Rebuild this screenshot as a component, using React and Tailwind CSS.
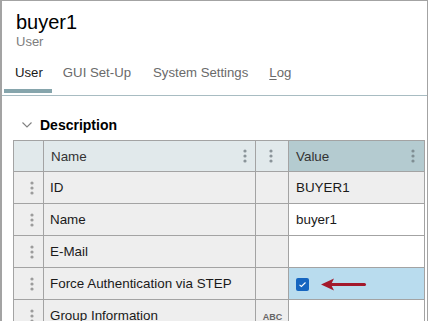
import React from "react";

const Dots = ({ color = "#8a9499" }) => (
  <svg width="4" height="14" viewBox="0 0 4 14" className="shrink-0">
    <circle cx="2" cy="2" r="1.6" fill={color} />
    <circle cx="2" cy="7" r="1.6" fill={color} />
    <circle cx="2" cy="12" r="1.6" fill={color} />
  </svg>
);

const B = "border-[#a3a3a3]";

function Cell({ className = "", children }) {
  return (
    <div className={`border-l border-t ${B} flex items-center ${className}`}>
      {children}
    </div>
  );
}

const rows = [
  { name: "ID", value: "BUYER1", valueBg: "bg-[#eeeeee]" },
  { name: "Name", value: "buyer1", valueBg: "bg-white" },
  { name: "E-Mail", value: "", valueBg: "bg-white" },
  { name: "Force Authentication via STEP", check: true, valueBg: "bg-[#b9dcee]" },
  { name: "Group Information", abc: true, value: "", valueBg: "bg-white" },
];

export default function App() {
  return (
    <div className="w-[428px] h-[321px] overflow-hidden bg-white border-t border-l-2 border-r border-[#a3a3a3] font-['Liberation_Sans',Arial,sans-serif] text-[#1a1a1a]">
      <div className="pl-[14px] pt-[9px]">
        <div className="text-[20px] leading-[24px] text-black">buyer1</div>
        <div className="text-[13px] leading-[16px] text-[#7d7d7d]">User</div>
      </div>

      <div className="mt-[14px] flex border-b border-[#a8bcc2] pl-[2px] text-[13.2px] leading-[18px]">
        <div className="flex flex-col">
          <div className="pl-[11px] pr-[9px] pb-[7px] text-[#1a1a1a]">User</div>
          <div className="h-[4px] bg-[#86a5ac]" />
          <div className="h-[2px]" />
        </div>
        <div className="pl-[11px] pr-[11px] text-[#6a6a6a]">GUI Set-Up</div>
        <div className="px-[11px] text-[#6a6a6a]">System Settings</div>
        <div className="px-[10px] text-[#6a6a6a]">
          <span className="underline underline-offset-2">L</span>og
        </div>
      </div>

      <div className="mt-[20px] flex items-center h-[18px]">
        <div className="w-[38px] flex justify-end pr-[8px]">
          <svg width="10" height="6" viewBox="0 0 10 6">
            <path d="M0.5 0.5 L5 5 L9.5 0.5" fill="none" stroke="#808080" strokeWidth="1.1" />
          </svg>
        </div>
        <div className="text-[14px] font-bold leading-[18px] text-black">Description</div>
      </div>

      <div className={`mt-[6px] ml-[11px] w-[412px] grid grid-cols-[30px_212px_33px_137px] text-[13.4px]`}>
        {/* header */}
        <Cell className="h-[31px] bg-[#e1e9eb]" />
        <Cell className="h-[31px] bg-[#e1e9eb] pl-[7px] pr-[8px] justify-between">
          <span className="text-[#333] pt-[3px]">Name</span>
          <Dots />
        </Cell>
        <Cell className="h-[31px] bg-[#e1e9eb] justify-center pl-[10px] pr-[12px]">
          <Dots />
        </Cell>
        <Cell className="h-[31px] bg-[#b4cbd0] border-r pl-[7px] pr-[9px] justify-between">
          <span className="text-[#333] pt-[3px]">Value</span>
          <Dots color="#7f8e93" />
        </Cell>

        {rows.map((r) => (
          <React.Fragment key={r.name}>
            <Cell className="h-[32px] justify-center pl-[6px] bg-[#eeeeee]">
              <Dots color="#9c9c9c" />
            </Cell>
            <Cell className="h-[32px] bg-[#eeeeee] pl-[6px]">
              <span className="pt-[2px]">{r.name}</span>
            </Cell>
            <Cell className="h-[32px] bg-[#eeeeee] justify-center">
              {r.abc && (
                <span className="text-[9px] font-bold leading-none text-[#666] pl-[1px] pt-[3px]">ABC</span>
              )}
            </Cell>
            <Cell className={`h-[32px] border-r ${r.valueBg} pl-[7px]`}>
              {r.check ? (
                <div className="flex items-center pt-[1px]">
                  <div className="w-[13px] h-[13px] rounded-[2px] bg-[#1565c0] flex items-center justify-center">
                    <svg width="9" height="7" viewBox="0 0 9 7">
                      <path d="M1.5 3.8 L3.4 5.5 L7.5 1.5" fill="none" stroke="#ffffff" strokeWidth="1.1" />
                    </svg>
                  </div>
                  <svg width="46" height="13" viewBox="0 0 46 13" className="ml-[12px]">
                    <polygon points="0,6.5 13,0.5 10,6.5 13,12.5" fill="#a3192b" />
                    <rect x="9" y="5" width="36" height="3" rx="1.5" fill="#a3192b" />
                  </svg>
                </div>
              ) : (
                <span className="pt-[2px]">{r.value}</span>
              )}
            </Cell>
          </React.Fragment>
        ))}
      </div>
    </div>
  );
}
